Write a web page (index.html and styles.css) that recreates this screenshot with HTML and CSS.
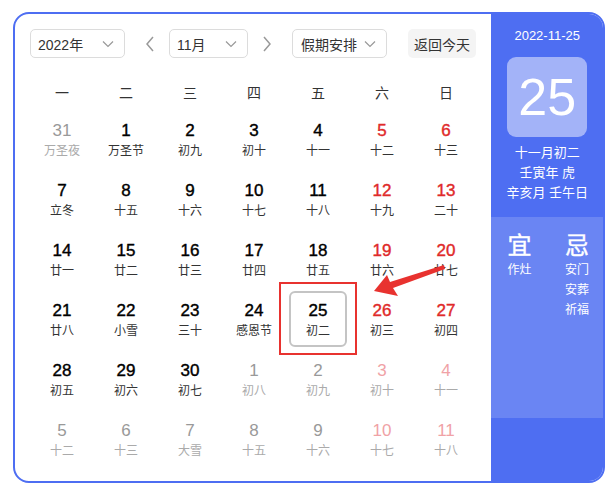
FILE: index.html
```html
<!DOCTYPE html>
<html lang="zh">
<head>
<meta charset="utf-8">
<link rel="stylesheet" href="styles.css">
</head>
<body>
<div class="page">
  <div class="cal">
    <div class="main">
      <div class="toolbar">
        <div class="select sel-year"><span>2022年</span><svg class="chev" viewBox="0 0 12 8"><path d="M1 1.5 L6 6.5 L11 1.5" fill="none" stroke="#999" stroke-width="1.2"/></svg></div>
        <svg class="nav nav-prev" viewBox="0 0 10 16"><path d="M8 1 L2 8 L8 15" fill="none" stroke="#999" stroke-width="1.5"/></svg>
        <div class="select sel-month"><span>11月</span><svg class="chev" viewBox="0 0 12 8"><path d="M1 1.5 L6 6.5 L11 1.5" fill="none" stroke="#999" stroke-width="1.2"/></svg></div>
        <svg class="nav nav-next" viewBox="0 0 10 16"><path d="M2 1 L8 8 L2 15" fill="none" stroke="#999" stroke-width="1.5"/></svg>
        <div class="select sel-hol"><span>假期安排</span><svg class="chev" viewBox="0 0 12 8"><path d="M1 1.5 L6 6.5 L11 1.5" fill="none" stroke="#999" stroke-width="1.2"/></svg></div>
        <div class="today-btn">返回今天</div>
      </div>
      <div class="grid">
        <div class="wk">一</div><div class="wk">二</div><div class="wk">三</div><div class="wk">四</div><div class="wk">五</div><div class="wk">六</div><div class="wk">日</div>

        <div class="day other"><div class="in"><div class="n">31</div><div class="l">万圣夜</div></div></div>
        <div class="day"><div class="in"><div class="n">1</div><div class="l">万圣节</div></div></div>
        <div class="day"><div class="in"><div class="n">2</div><div class="l">初九</div></div></div>
        <div class="day"><div class="in"><div class="n">3</div><div class="l">初十</div></div></div>
        <div class="day"><div class="in"><div class="n">4</div><div class="l">十一</div></div></div>
        <div class="day we"><div class="in"><div class="n">5</div><div class="l">十二</div></div></div>
        <div class="day we"><div class="in"><div class="n">6</div><div class="l">十三</div></div></div>

        <div class="day"><div class="in"><div class="n">7</div><div class="l">立冬</div></div></div>
        <div class="day"><div class="in"><div class="n">8</div><div class="l">十五</div></div></div>
        <div class="day"><div class="in"><div class="n">9</div><div class="l">十六</div></div></div>
        <div class="day"><div class="in"><div class="n">10</div><div class="l">十七</div></div></div>
        <div class="day"><div class="in"><div class="n">11</div><div class="l">十八</div></div></div>
        <div class="day we"><div class="in"><div class="n">12</div><div class="l">十九</div></div></div>
        <div class="day we"><div class="in"><div class="n">13</div><div class="l">二十</div></div></div>

        <div class="day"><div class="in"><div class="n">14</div><div class="l">廿一</div></div></div>
        <div class="day"><div class="in"><div class="n">15</div><div class="l">廿二</div></div></div>
        <div class="day"><div class="in"><div class="n">16</div><div class="l">廿三</div></div></div>
        <div class="day"><div class="in"><div class="n">17</div><div class="l">廿四</div></div></div>
        <div class="day"><div class="in"><div class="n">18</div><div class="l">廿五</div></div></div>
        <div class="day we"><div class="in"><div class="n">19</div><div class="l">廿六</div></div></div>
        <div class="day we"><div class="in"><div class="n">20</div><div class="l">廿七</div></div></div>

        <div class="day"><div class="in"><div class="n">21</div><div class="l">廿八</div></div></div>
        <div class="day"><div class="in"><div class="n">22</div><div class="l">小雪</div></div></div>
        <div class="day"><div class="in"><div class="n">23</div><div class="l">三十</div></div></div>
        <div class="day"><div class="in"><div class="n">24</div><div class="l">感恩节</div></div></div>
        <div class="day sel"><div class="in"><div class="n">25</div><div class="l">初二</div></div></div>
        <div class="day we"><div class="in"><div class="n">26</div><div class="l">初三</div></div></div>
        <div class="day we"><div class="in"><div class="n">27</div><div class="l">初四</div></div></div>

        <div class="day"><div class="in"><div class="n">28</div><div class="l">初五</div></div></div>
        <div class="day"><div class="in"><div class="n">29</div><div class="l">初六</div></div></div>
        <div class="day"><div class="in"><div class="n">30</div><div class="l">初七</div></div></div>
        <div class="day other"><div class="in"><div class="n">1</div><div class="l">初八</div></div></div>
        <div class="day other"><div class="in"><div class="n">2</div><div class="l">初九</div></div></div>
        <div class="day other we"><div class="in"><div class="n">3</div><div class="l">初十</div></div></div>
        <div class="day other we"><div class="in"><div class="n">4</div><div class="l">十一</div></div></div>

        <div class="day other"><div class="in"><div class="n">5</div><div class="l">十二</div></div></div>
        <div class="day other"><div class="in"><div class="n">6</div><div class="l">十三</div></div></div>
        <div class="day other"><div class="in"><div class="n">7</div><div class="l">大雪</div></div></div>
        <div class="day other"><div class="in"><div class="n">8</div><div class="l">十五</div></div></div>
        <div class="day other"><div class="in"><div class="n">9</div><div class="l">十六</div></div></div>
        <div class="day other we"><div class="in"><div class="n">10</div><div class="l">十七</div></div></div>
        <div class="day other we"><div class="in"><div class="n">11</div><div class="l">十八</div></div></div>
      </div>
    </div>
    <div class="side">
      <div class="side-top">
        <div class="date">2022-11-25</div>
        <div class="bigday">25</div>
        <div class="lunar">十一月初二</div>
        <div class="lunar">壬寅年 虎</div>
        <div class="lunar">辛亥月 壬午日</div>
      </div>
      <div class="side-mid">
        <div class="yj">
          <div class="yj-h">宜</div>
          <div class="yj-i">作灶</div>
        </div>
        <div class="yj">
          <div class="yj-h">忌</div>
          <div class="yj-i">安门</div>
          <div class="yj-i">安葬</div>
          <div class="yj-i">祈福</div>
        </div>
      </div>
      <div class="side-bot"></div>
    </div>
  </div>
  <div class="mark"></div>
  <svg class="arrow" viewBox="0 0 80 40" width="80" height="40">
    <polygon points="0,29 13,13 16,20 70,3 71,7 19,26 24,34" fill="#e8322f"/>
  </svg>
</div>
</body>
</html>
```

FILE: styles.css
```css
* { box-sizing: border-box; }
html, body { margin: 0; padding: 0; background: #fff; }
body {
  font-family: "Liberation Sans", "Noto Sans CJK SC", sans-serif;
  color: #333;
}
.page {
  position: relative;
  width: 615px;
  height: 496px;
  padding: 12px 0 0 13px;
}
.cal {
  width: 592px;
  height: 471px;
  border: 2px solid #4e6ef2;
  border-radius: 16px;
  overflow: hidden;
  display: flex;
}
.main {
  width: 478px;
  padding: 15px 0 0 15px;
}
.toolbar {
  display: flex;
  align-items: center;
  height: 29px;
}
.select {
  height: 29px;
  border: 1px solid #dcdcdc;
  border-radius: 5px;
  display: flex;
  align-items: center;
  justify-content: space-between;
  padding: 0 10px 0 7px;
  font-size: 14px;
  color: #333;
}
.chev { width: 12px; height: 8px; }
.sel-year { width: 95px; }
.sel-month { width: 79px; }
.sel-hol { width: 95px; padding-left: 8px; }
.nav { width: 10px; height: 16px; flex: none; }
.nav-prev { margin: 0 14px 0 20px; }
.nav-next { margin: 0 20px 0 14px; }
.today-btn {
  margin-left: 21px;
  height: 29px;
  width: 68px;
  background: #f4f4f4;
  border-radius: 5px;
  font-size: 14px;
  display: flex;
  align-items: center;
  justify-content: center;
  color: #333;
}
.grid {
  margin-top: 15px;
  display: grid;
  grid-template-columns: repeat(7, 64px);
  grid-template-rows: 38px repeat(6, 60px);
}
.wk {
  font-size: 14px;
  display: flex;
  align-items: center;
  justify-content: center;
  color: #333;
}
.day { display: flex; justify-content: center; }
.in {
  width: 58px;
  height: 56px;
  padding-top: 10px;
  text-align: center;
  border: 2px solid transparent;
  border-radius: 6px;
}
.n {
  font-size: 17px;
  line-height: 20px;
  color: #000;
  margin-top: -2px;
  -webkit-text-stroke: 0.4px currentColor;
}
.l { font-size: 12px; line-height: 20px; color: #333; }
.we .n { color: #e02a2a; }
.other .n { color: #999; -webkit-text-stroke: 0; }
.other .l { color: #aaa; }
.other.we .n { color: #f0a2a6; }
.sel .in { border-color: #c4c4c4; }

.side {
  width: 112px;
  display: flex;
  flex-direction: column;
  color: #fff;
}
.side-top {
  height: 203px;
  background: #4e6ef2;
  display: flex;
  flex-direction: column;
  align-items: center;
  padding-top: 13px;
}
.date { font-size: 13px; line-height: 18px; }
.bigday {
  margin-top: 12px;
  width: 80px;
  height: 80px;
  border-radius: 9px;
  background: #a3b3f8;
  font-size: 52px;
  display: flex;
  align-items: center;
  justify-content: center;
  color: #fff;
}
.lunar { font-size: 13px; line-height: 20px; }
.bigday + .lunar { margin-top: 6px; }
.side-mid {
  height: 201px;
  background: #6a85f3;
  display: flex;
  justify-content: space-between;
  padding: 15px 6px 0 8px;
}
.yj { display: flex; flex-direction: column; align-items: center; width: 40px; }
.yj-h { font-size: 24px; line-height: 28px; -webkit-text-stroke: 0.4px #fff; }
.yj-i { font-size: 12px; line-height: 20px; }
.side-bot { flex: 1; background: #4e6ef2; }

.mark {
  position: absolute;
  left: 279px;
  top: 282px;
  width: 78px;
  height: 73px;
  border: 2px solid #e8322f;
}
.arrow {
  position: absolute;
  left: 374px;
  top: 262px;
}
```
